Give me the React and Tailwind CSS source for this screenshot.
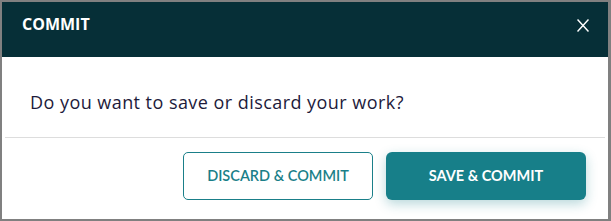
export default function App() {
    return (
        <div className="w-[611px] h-[221px] bg-[#808080] pl-[2px] pt-[2px] pr-[3px] pb-[2px]">
            <div className="flex h-full flex-col bg-white">
                {/* header */}
                <div className="flex h-[55px] items-start justify-between bg-[#062f37] pl-[20px] pr-[19px] pt-[12px]">
                    <h2 className="font-['Open_Sans',sans-serif] text-[16px] leading-[20px] font-bold text-white">
                        COMMIT
                    </h2>
                    <button className="mt-[5px] text-white">
                        <svg width="12" height="13" viewBox="0 0 12 13" fill="none">
                            <path d="M0.5 0.5L11.5 12.5M11.5 0.5L0.5 12.5" stroke="currentColor" strokeWidth="1.5" />
                        </svg>
                    </button>
                </div>

                <div className="pl-[28px] pt-[33px] pb-[23px]">
                    <p className="font-['Open_Sans',sans-serif] text-[18px] leading-[24px] tracking-[0.45px] text-[#1d1a3b]">
                        Do you want to save or discard your work?
                    </p>
                </div>

                <div className="mx-[3px] h-px bg-[#dddddd]" />

                <div className="flex justify-end gap-[13px] pr-[22px] pt-[14px]">
                    <button className="h-[48px] w-[190px] rounded-[5px] border border-[#1a7f89] bg-white font-['Lato',sans-serif] text-[14.5px] font-semibold text-[#1a7f89]">
                        DISCARD &amp; COMMIT
                    </button>
                    <button className="h-[48px] w-[200px] rounded-[6px] bg-[#177f89] font-['Lato',sans-serif] text-[14.5px] font-bold text-white shadow-[0_4px_12px_rgba(23,127,137,0.3)]">
                        SAVE &amp; COMMIT
                    </button>
                </div>
            </div>
        </div>
    );
}
